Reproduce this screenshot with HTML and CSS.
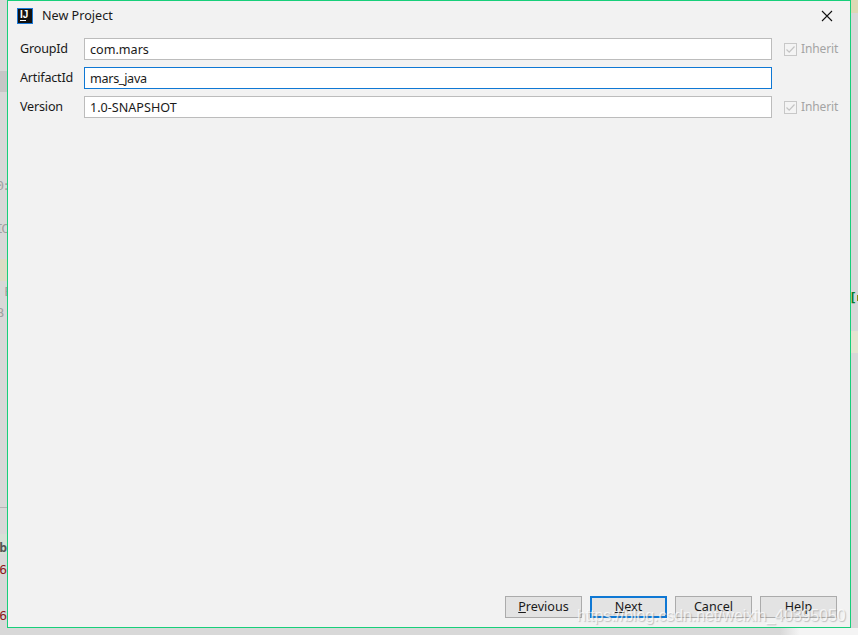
FILE: index.html
```html
<!DOCTYPE html>
<html lang="en">
<head>
  <meta charset="UTF-8">
  <title>New Project</title>
  <link rel="stylesheet" href="styles.css">
</head>
<body>

  <!-- Editor showing behind the dialog -->
  <div class="backdrop">
    <span class="bg-band band-top"></span>
    <span class="bg-band band-corner"></span>
    <span class="bg-band band-yellow"></span>
    <span class="bg-band band-yellow-right"></span>
    <span class="bg-band band-line"></span>
    <span class="bg-band band-tool"></span>
    <span class="bg-band band-dot"></span>
    <span class="bg-band band-bottom"></span>
    <span class="bg-text text-a">0:</span>
    <span class="bg-text text-b">IC</span>
    <span class="bg-text text-c">E</span>
    <span class="bg-text text-d">B</span>
    <span class="bg-text text-e">b</span>
    <span class="bg-text text-f">6</span>
    <span class="bg-text text-g">6</span>
    <span class="bg-text text-h">[</span>
  </div>

  <section class="dialog">
    <header class="title-bar">
      <div class="app-icon"><span class="app-icon-text">IJ</span><span class="app-icon-bar"></span></div>
      <span class="title">New Project</span>
      <svg class="close" width="12" height="12" viewBox="0 0 12 12">
        <path d="M1 1 L11 11 M11 1 L1 11" stroke="#111" stroke-width="1.1" fill="none"/>
      </svg>
    </header>

    <form class="form">
      <div class="form-row">
        <label class="form-label">GroupId</label>
        <input class="text-input" type="text" value="com.mars">
        <div class="inherit">
          <span class="check-box">
            <svg width="13" height="13" viewBox="0 0 13 13"><path d="M2.5 6.5 L5.2 9.2 L10.5 3.5" stroke="#c4c4c4" stroke-width="1.2" fill="none"/></svg>
          </span>
          <span class="inherit-text">Inherit</span>
        </div>
      </div>
      <div class="form-row">
        <label class="form-label">ArtifactId</label>
        <input class="text-input focused" type="text" value="mars_java">
      </div>
      <div class="form-row">
        <label class="form-label">Version</label>
        <input class="text-input" type="text" value="1.0-SNAPSHOT">
        <div class="inherit">
          <span class="check-box">
            <svg width="13" height="13" viewBox="0 0 13 13"><path d="M2.5 6.5 L5.2 9.2 L10.5 3.5" stroke="#c4c4c4" stroke-width="1.2" fill="none"/></svg>
          </span>
          <span class="inherit-text">Inherit</span>
        </div>
      </div>
    </form>

    <footer class="button-bar">
      <button class="btn" type="button"><u>P</u>revious</button>
      <button class="btn default" type="button"><u>N</u>ext</button>
      <button class="btn" type="button">Cancel</button>
      <button class="btn" type="button">Help</button>
    </footer>
  </section>

  <div class="watermark">https://blog.csdn.net/weixin_40395050</div>

</body>
</html>
```

FILE: styles.css
```css
/* General */
html, body {
  height: 100%;
}

body {
  margin: 0;
  overflow: hidden;
  position: relative;
  background-color: #d8d8d8;
  font-family: "Noto Sans", "Open Sans", sans-serif;
  font-size: 12.6px;
  color: #1a1a1a;
}

/* Backdrop */
.backdrop {
  position: absolute;
  inset: 0;
  overflow: hidden;
}

.bg-band {
  position: absolute;
  display: block;
}

.band-top {
  left: 0;
  top: 71px;
  width: 7px;
  height: 21px;
  background: #c6c6c6;
}

.band-corner {
  left: 851px;
  top: 0;
  width: 7px;
  height: 13px;
  background: #dcd9b4;
}

.band-yellow {
  left: 0;
  top: 259px;
  width: 7px;
  height: 22px;
  background: #dcdcc4;
}

.band-yellow-right {
  left: 851px;
  top: 331px;
  width: 7px;
  height: 22px;
  background: #e4e4d0;
}

.band-line {
  left: 0;
  top: 507px;
  width: 7px;
  height: 1px;
  background: #b4b4b4;
}

.band-tool {
  left: 0;
  top: 534px;
  width: 7px;
  height: 20px;
  background: #d6e0d6;
}

.band-dot {
  left: 857px;
  top: 295px;
  width: 1px;
  height: 6px;
  background: #8a8a10;
}

.band-bottom {
  left: 780px;
  top: 628px;
  width: 78px;
  height: 7px;
  background: linear-gradient(to right, #d8d8d8, #f4f4f4 25%, #f4f4f4);
}

.bg-text {
  position: absolute;
  font-family: "DejaVu Sans Mono", monospace;
  font-size: 13px;
  line-height: 16px;
  color: #a0a0a0;
}

.text-a { right: 850px; top: 178px; letter-spacing: -2px; }
.text-b { right: 851px; top: 221px; letter-spacing: -2px; }
.text-c { right: 846px; top: 284px; }
.text-d { right: 854px; top: 305px; }
.text-e { right: 851px; top: 540px; color: #555; font-weight: bold; }
.text-f { right: 851px; top: 562px; color: #8b1a1a; }
.text-g { right: 851px; top: 608px; color: #8b1a1a; }
.text-h { left: 849px; top: 290px; color: #0a7a2a; font-weight: bold; }

/* Dialog window */
.dialog {
  position: absolute;
  left: 7px;
  top: 0;
  width: 842px;
  height: 626px;
  display: flex;
  flex-direction: column;
  background-color: #f2f2f2;
  border: 1px solid #17cf7a;
}

.title-bar {
  display: flex;
  align-items: center;
  height: 29px;
  padding-left: 9px;
  padding-right: 17px;
}

.app-icon {
  position: relative;
  flex: none;
  width: 16px;
  height: 16px;
  box-sizing: border-box;
  background: #111;
  border: 1px solid #1a78d8;
}

.app-icon-text {
  position: absolute;
  left: 2px;
  top: 0;
  font-family: "Liberation Sans", sans-serif;
  font-size: 10px;
  line-height: 11px;
  font-weight: bold;
  color: #fff;
}

.app-icon-bar {
  position: absolute;
  left: 2px;
  bottom: 2px;
  width: 6px;
  height: 1px;
  background: #fff;
}

.title {
  margin-left: 9px;
  flex: 1;
}

/* Form */
.form {
  display: flex;
  flex-direction: column;
  gap: 7px;
  padding: 8px 0 0 12px;
}

.form-row {
  display: flex;
  align-items: center;
  height: 22px;
}

.form-label {
  flex: none;
  width: 64px;
  padding-bottom: 1px;
  letter-spacing: -0.2px;
}

.text-input {
  flex: none;
  width: 688px;
  height: 22px;
  box-sizing: border-box;
  padding: 0 5px;
  border: 1px solid #bcbcbc;
  background: #fff;
  font: inherit;
  color: #1a1a1a;
  outline: none;
}

.text-input.focused {
  border-color: #0f78d4;
  letter-spacing: -0.3px;
}

.inherit {
  flex: none;
  display: flex;
  align-items: center;
  gap: 4px;
  margin-left: 12px;
  color: #a4a4a4;
}

.inherit-text {
  padding-bottom: 1px;
  font-size: 12px;
  letter-spacing: -0.1px;
}

.check-box {
  display: block;
  width: 13px;
  height: 13px;
  box-sizing: border-box;
  border: 1px solid #c8c8c8;
  background: #f4f4f4;
}

.check-box svg {
  display: block;
  margin: -1px;
}

/* Buttons */
.button-bar {
  display: flex;
  justify-content: flex-end;
  gap: 8px;
  margin-top: auto;
  padding: 0 13px 9px 0;
}

.btn {
  width: 77px;
  height: 22px;
  padding: 0 0 2px;
  border: 1px solid #ababab;
  background: #e3e3e3;
  font: inherit;
  color: #1a1a1a;
}

.btn.default {
  border: 2px solid #0f78d4;
}

.watermark {
  position: absolute;
  left: 577px;
  top: 607px;
  font-family: "Liberation Sans", sans-serif;
  font-size: 16px;
  letter-spacing: -0.1px;
  color: rgba(255, 255, 255, 0.72);
  text-shadow: 1px 1px 1px rgba(130, 130, 130, 0.45);
  white-space: nowrap;
}
```
